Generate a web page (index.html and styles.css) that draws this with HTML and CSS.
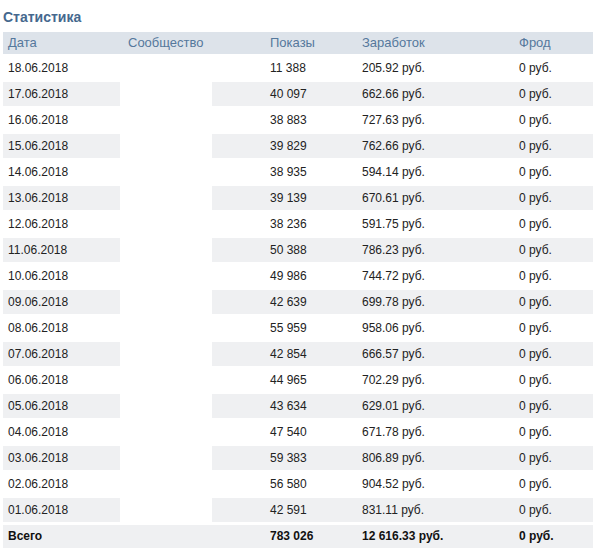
FILE: index.html
```html
<!DOCTYPE html>
<html lang="ru">
<head>
<meta charset="utf-8">
<link rel="stylesheet" href="styles.css">
</head>
<body>
<div class="page">
  <div class="title">Статистика</div>
  <div class="table">
    <div class="row head">
      <div class="c c-date">Дата</div>
      <div class="c c-comm">Сообщество</div>
      <div class="c">Показы</div>
      <div class="c">Заработок</div>
      <div class="c">Фрод</div>
    </div>
    <div class="row"><div class="c c-date">18.06.2018</div><div class="c c-comm"><div class="blank"></div></div><div class="c">11 388</div><div class="c">205.92 руб.</div><div class="c">0 руб.</div></div>
    <div class="row alt"><div class="c c-date">17.06.2018</div><div class="c c-comm"><div class="blank"></div></div><div class="c">40 097</div><div class="c">662.66 руб.</div><div class="c">0 руб.</div></div>
    <div class="row"><div class="c c-date">16.06.2018</div><div class="c c-comm"><div class="blank"></div></div><div class="c">38 883</div><div class="c">727.63 руб.</div><div class="c">0 руб.</div></div>
    <div class="row alt"><div class="c c-date">15.06.2018</div><div class="c c-comm"><div class="blank"></div></div><div class="c">39 829</div><div class="c">762.66 руб.</div><div class="c">0 руб.</div></div>
    <div class="row"><div class="c c-date">14.06.2018</div><div class="c c-comm"><div class="blank"></div></div><div class="c">38 935</div><div class="c">594.14 руб.</div><div class="c">0 руб.</div></div>
    <div class="row alt"><div class="c c-date">13.06.2018</div><div class="c c-comm"><div class="blank"></div></div><div class="c">39 139</div><div class="c">670.61 руб.</div><div class="c">0 руб.</div></div>
    <div class="row"><div class="c c-date">12.06.2018</div><div class="c c-comm"><div class="blank"></div></div><div class="c">38 236</div><div class="c">591.75 руб.</div><div class="c">0 руб.</div></div>
    <div class="row alt"><div class="c c-date">11.06.2018</div><div class="c c-comm"><div class="blank"></div></div><div class="c">50 388</div><div class="c">786.23 руб.</div><div class="c">0 руб.</div></div>
    <div class="row"><div class="c c-date">10.06.2018</div><div class="c c-comm"><div class="blank"></div></div><div class="c">49 986</div><div class="c">744.72 руб.</div><div class="c">0 руб.</div></div>
    <div class="row alt"><div class="c c-date">09.06.2018</div><div class="c c-comm"><div class="blank"></div></div><div class="c">42 639</div><div class="c">699.78 руб.</div><div class="c">0 руб.</div></div>
    <div class="row"><div class="c c-date">08.06.2018</div><div class="c c-comm"><div class="blank"></div></div><div class="c">55 959</div><div class="c">958.06 руб.</div><div class="c">0 руб.</div></div>
    <div class="row alt"><div class="c c-date">07.06.2018</div><div class="c c-comm"><div class="blank"></div></div><div class="c">42 854</div><div class="c">666.57 руб.</div><div class="c">0 руб.</div></div>
    <div class="row"><div class="c c-date">06.06.2018</div><div class="c c-comm"><div class="blank"></div></div><div class="c">44 965</div><div class="c">702.29 руб.</div><div class="c">0 руб.</div></div>
    <div class="row alt"><div class="c c-date">05.06.2018</div><div class="c c-comm"><div class="blank"></div></div><div class="c">43 634</div><div class="c">629.01 руб.</div><div class="c">0 руб.</div></div>
    <div class="row"><div class="c c-date">04.06.2018</div><div class="c c-comm"><div class="blank"></div></div><div class="c">47 540</div><div class="c">671.78 руб.</div><div class="c">0 руб.</div></div>
    <div class="row alt"><div class="c c-date">03.06.2018</div><div class="c c-comm"><div class="blank"></div></div><div class="c">59 383</div><div class="c">806.89 руб.</div><div class="c">0 руб.</div></div>
    <div class="row"><div class="c c-date">02.06.2018</div><div class="c c-comm"><div class="blank"></div></div><div class="c">56 580</div><div class="c">904.52 руб.</div><div class="c">0 руб.</div></div>
    <div class="row alt"><div class="c c-date">01.06.2018</div><div class="c c-comm"><div class="blank"></div></div><div class="c">42 591</div><div class="c">831.11 руб.</div><div class="c">0 руб.</div></div>
    <div class="row total"><div class="c c-date">Всего</div><div class="c c-comm"></div><div class="c">783 026</div><div class="c">12 616.33 руб.</div><div class="c">0 руб.</div></div>
  </div>
</div>
</body>
</html>
```

FILE: styles.css
```css
html, body {
  margin: 0;
  padding: 0;
  background: #fff;
}
.page {
  padding: 0 6px 0 3px;
  font-family: "Liberation Sans", Arial, sans-serif;
  font-size: 12px;
  color: #222;
}
.title {
  margin-top: 8px;
  line-height: 18px;
  height: 18px;
  margin-bottom: 6px;
  font-size: 14px;
  font-weight: bold;
  color: #45688e;
}
.table {
  width: 590px;
}
.row {
  display: grid;
  grid-template-columns: 117px 145px 92px 157px 79px;
  height: 24px;
  line-height: 24px;
  margin-top: 2px;
  background: #fff;
}
.row.alt {
  background: #eff0f2;
}
.row.head {
  margin-top: 0;
  height: 22px;
  line-height: 22px;
  font-size: 13px;
  background: #dde3ea;
  color: #55789c;
}
.row.total {
  margin-top: 3px;
  height: 23px;
  line-height: 23px;
  background: #eff0f2;
  font-weight: bold;
  color: #111;
}
.c {
  padding-left: 5px;
  white-space: nowrap;
  overflow: hidden;
}
.c-comm {
  padding-left: 8px;
  position: relative;
}
.blank {
  position: absolute;
  left: 0;
  top: 0;
  width: 92px;
  height: 100%;
  background: #fff;
}
```
